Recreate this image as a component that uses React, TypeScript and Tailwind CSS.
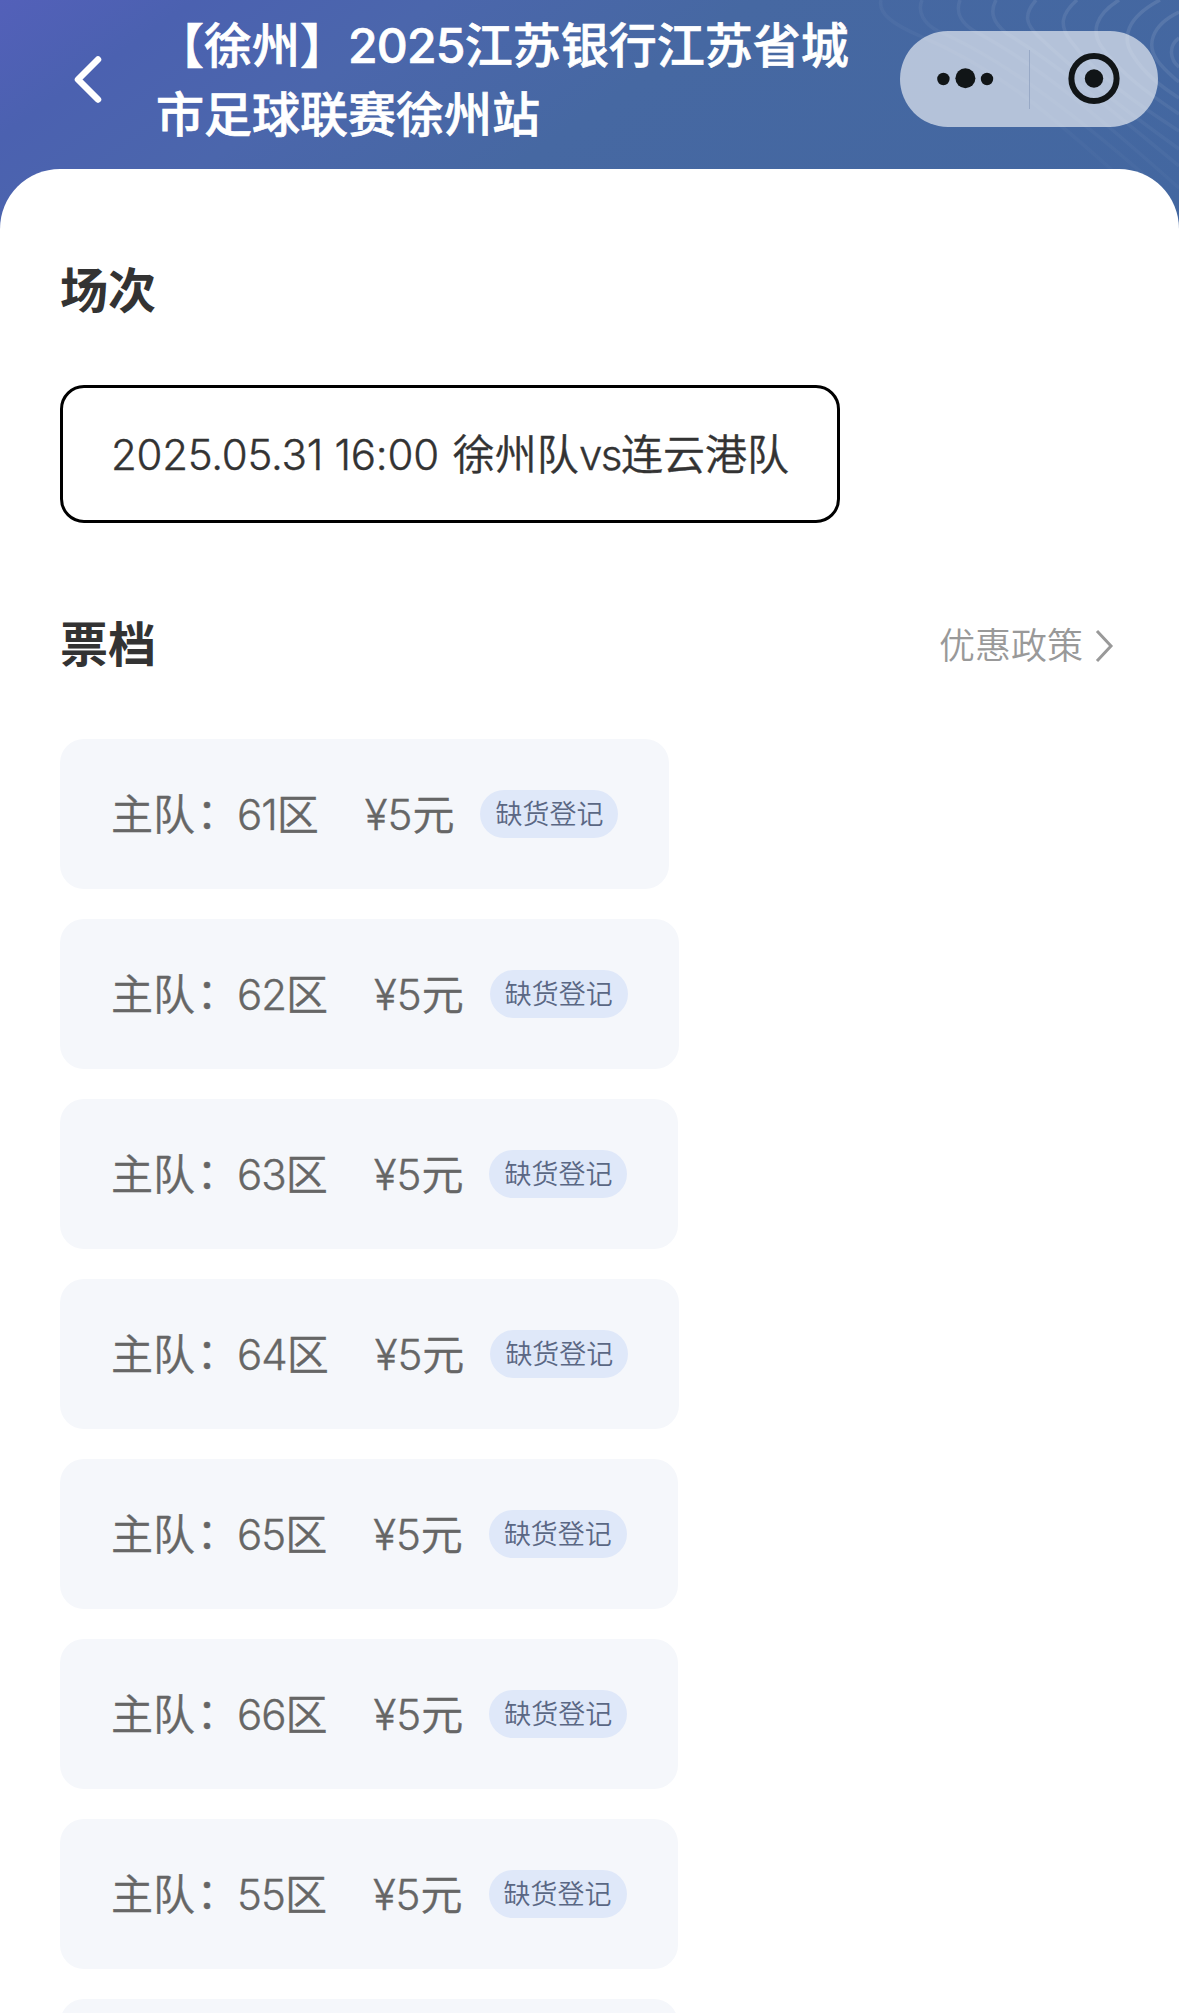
type Ticket = {
  area: number;
  price: number;
};

const tickets: Ticket[] = [
  { area: 61, price: 5 },
  { area: 62, price: 5 },
  { area: 63, price: 5 },
  { area: 64, price: 5 },
  { area: 65, price: 5 },
  { area: 66, price: 5 },
  { area: 55, price: 5 },
];

function Header() {
  return (
    <header className="relative h-[229px] overflow-hidden bg-[linear-gradient(145deg,#5360b9_0%,#4b61b0_13%,#4b66ac_29%,#4668a2_50%,#4367a0_100%)]">
      {/* Contour lines */}
      <svg
        className="absolute top-0 right-0"
        width="319"
        height="229"
        viewBox="860 0 319 229"
        fill="none"
        stroke="url(#contour)"
        strokeWidth="3.5"
      >
        <defs>
          <linearGradient id="contour" gradientUnits="userSpaceOnUse" x1="1100" y1="0" x2="1020" y2="170">
            <stop offset="0" stopColor="#fff" stopOpacity="0.1" />
            <stop offset="0.5" stopColor="#fff" stopOpacity="0.04" />
            <stop offset="1" stopColor="#fff" stopOpacity="0" />
          </linearGradient>
        </defs>
        <path d="M881 0C878 13 892 24 920 36C1000 70 1050 115 1112 170" />
        <path d="M922 0C917 12 924 24 938 31C1000 58 1070 110 1150 180" />
        <path d="M960 0C955 13 962 24 976 32C1040 66 1100 118 1179 188" />
        <path d="M996 0C989 13 994 23 1006 33C1066 70 1120 118 1179 166" />
        <path d="M1036 0C1023 15 1026 24 1038 36C1080 76 1130 114 1179 149" />
        <path d="M1077 0C1060 15 1060 26 1070 40C1096 76 1140 106 1179 131" />
        <path d="M1119 0C1094 16 1092 32 1101 46C1120 74 1152 96 1179 114" />
        <path d="M1160 0C1126 18 1122 38 1132 54C1144 74 1162 87 1179 98" />
        <path d="M1179 12C1150 26 1147 46 1157 60C1164 70 1172 76 1179 82" />
        <path d="M1179 38C1168 46 1170 60 1179 67" />
      </svg>

      <div className="relative flex items-start">
        <svg
          className="mt-[55px] ml-[71px] shrink-0"
          width="34"
          height="49"
          viewBox="0 0 34 49"
          fill="none"
          stroke="#fff"
          strokeWidth="6.5"
          strokeLinecap="round"
          strokeLinejoin="round"
        >
          <path d="M27 4.5L7 24.5L27 44.5" />
        </svg>
        <h1 className="mt-[11px] ml-[51px] w-[708px] text-[48px] leading-[69px] font-medium text-white [-webkit-text-stroke:0.7px_white]">
          【徐州】
          <span className="tracking-[-0.8px]">2025</span>
          江苏银行江苏省城市足球联赛徐州站
        </h1>
        <div className="mt-[31px] ml-[36px] flex h-24 w-[258px] shrink-0 items-center rounded-[48px] bg-white/60">
          <svg width="258" height="96" viewBox="900 31 258 96" fill="#111517">
            <circle cx="943.4" cy="79" r="6.2" />
            <circle cx="965.4" cy="78.2" r="10" />
            <circle cx="987" cy="79" r="6.2" />
            <path d="M1029.5 50V109" stroke="#98a9c6" />
            <circle cx="1094" cy="78.5" r="22.6" fill="none" stroke="#111517" strokeWidth="6" />
            <circle cx="1094" cy="78.5" r="9.2" />
          </svg>
        </div>
      </div>
    </header>
  );
}

function TicketCard({ ticket }: { ticket: Ticket }) {
  return (
    <li className="flex h-[150px] items-center rounded-[24px] bg-[#f5f7fb] px-[51px] text-[42px] font-[350] text-[#666] [-webkit-text-stroke:0.4px_#666]">
      <span className="flex pt-px">
        主队<span className="relative -top-px left-[1.5px]">：</span>
        <span className="tracking-[-1px]">{ticket.area}</span>区
      </span>
      <span className="ml-[46px] pt-px">¥{ticket.price}元</span>
      <span className="ml-[26px] flex h-12 items-center rounded-full bg-[#dfe8f9] px-[15px] pt-[3px] text-[27px] text-[#5a6784] [-webkit-text-stroke:0]">
        缺货登记
      </span>
    </li>
  );
}

export default function App() {
  return (
    <div className="h-[2013px] overflow-hidden bg-white font-[Inter,'Noto_Sans_CJK_SC',sans-serif]">
      <Header />
      <main className="relative -mt-[60px] rounded-t-[60px] bg-white px-[60px] pt-[87px]">
        <h2 className="text-[48px] leading-[70px] font-bold text-[#333]">场次</h2>
        <div className="mt-[59px] flex h-[138px] w-[780px] items-center rounded-[24px] border-3 border-black pl-[48px] text-[42px] font-[350] whitespace-nowrap text-[#333] [-webkit-text-stroke:0.4px_#333]">
          <span className="tracking-[-0.25px]">2025.05.31 16:00</span>
          <span className="ml-[14px]">徐州队</span>
          <span className="tracking-[-1.5px]">vs</span>
          <span>连云港队</span>
        </div>

        <div className="mt-[87px] flex h-[70px] items-center justify-between">
          <h2 className="text-[48px] leading-[70px] font-bold text-[#333]">票档</h2>
          <a className="mr-[5px] flex items-center pt-px text-[36px] font-[350] text-[#999]">
            优惠政策
            <svg
              className="ml-[11px]"
              width="20"
              height="34"
              viewBox="0 0 20 34"
              fill="none"
              stroke="#999"
              strokeWidth="3"
            >
              <path d="M3 2L17 17L3 32" />
            </svg>
          </a>
        </div>

        <ul className="mt-[59px] flex flex-col items-start gap-[30px]">
          {tickets.map((ticket) => (
            <TicketCard key={ticket.area} ticket={ticket} />
          ))}
          {/* Next row, still loading */}
          <li className="h-[150px] w-[618px] rounded-[24px] bg-[#f5f7fb]" />
        </ul>
      </main>
    </div>
  );
}
